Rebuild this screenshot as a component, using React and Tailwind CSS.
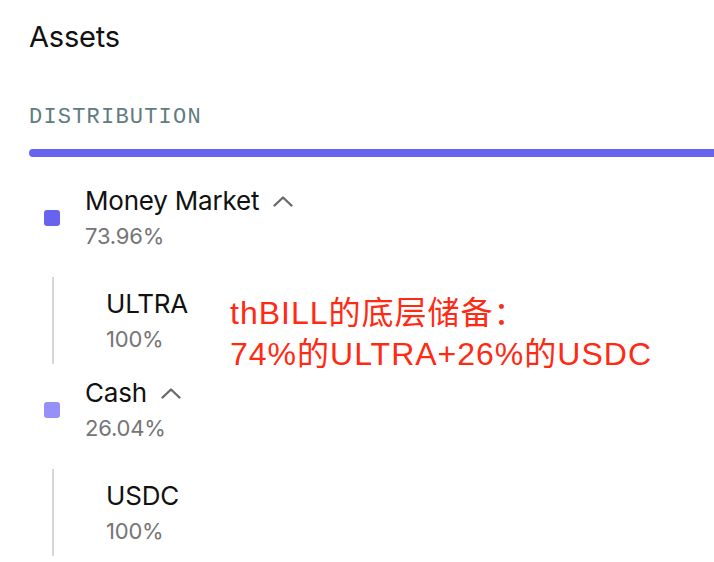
import React from "react";

const Chevron = () => (
  <svg width="20" height="11" viewBox="0 0 20 11" fill="none" className="shrink-0">
    <polyline points="1.5,9.5 10,1.5 18.5,9.5" stroke="#6b6b6b" strokeWidth="2.4" strokeLinecap="round" strokeLinejoin="round" />
  </svg>
);

const groups = [
  { name: "Money Market", pct: "73.96%", color: "bg-[#6763ef]", sub: { name: "ULTRA", pct: "100%" } },
  { name: "Cash", pct: "26.04%", color: "bg-[#9591f9]", sub: { name: "USDC", pct: "100%" } },
];

const App = () => {
  return (
    <div className="relative w-[714px] h-[562px] overflow-hidden bg-white pl-[29px] font-['Inter',sans-serif] text-[#111]">
      <h2 className="pt-[19px] text-[29px] leading-[35px] font-normal tracking-[-0.2px]">Assets</h2>

      <div className="mt-[51px] font-['Liberation_Mono',monospace] text-[22px] leading-[26px] tracking-[1.2px] text-[#5f7c80]">
        DISTRIBUTION
      </div>

      {/* allocation bar, runs off the right edge */}
      <div className="mt-[18px] h-2 rounded-l-full bg-[#6863ef]"></div>

      <div className="mt-[28px] flex flex-col gap-[13px] pl-[15px]">
        {groups.map((g) => (
          <div key={g.name}>
            <div className="flex items-center gap-[25px]">
              <span className={`w-4 h-4 rounded-[3px] ${g.color}`}></span>
              <div>
                <div className="flex items-center gap-[14px]">
                  <span className="text-[26px] leading-[32px] tracking-[-0.2px]">{g.name}</span>
                  <Chevron />
                </div>
                <div className="mt-[5px] text-[22px] leading-[28px] tracking-[-0.2px] text-[#757575]">{g.pct}</div>
              </div>
            </div>
            <div className="mt-[27px] ml-[8px] border-l-2 border-[#d6d6d6] pl-[52px] py-[11px]">
              <div className="text-[26px] leading-[32px] tracking-[-0.2px]">{g.sub.name}</div>
              <div className="mt-[5px] text-[22px] leading-[28px] tracking-[-0.2px] text-[#757575]">{g.sub.pct}</div>
            </div>
          </div>
        ))}
      </div>

      {/* red annotation laid over the list */}
      <div className="absolute left-[230px] top-[293px] font-['Liberation_Sans','Noto_Sans_CJK_SC',sans-serif] text-[32px] leading-[41px] tracking-[1px] text-[#ff2a14]">
        <div>thBILL的底层储备：</div>
        <div>74%的ULTRA+26%的USDC</div>
      </div>
    </div>
  );
};

export default App;
